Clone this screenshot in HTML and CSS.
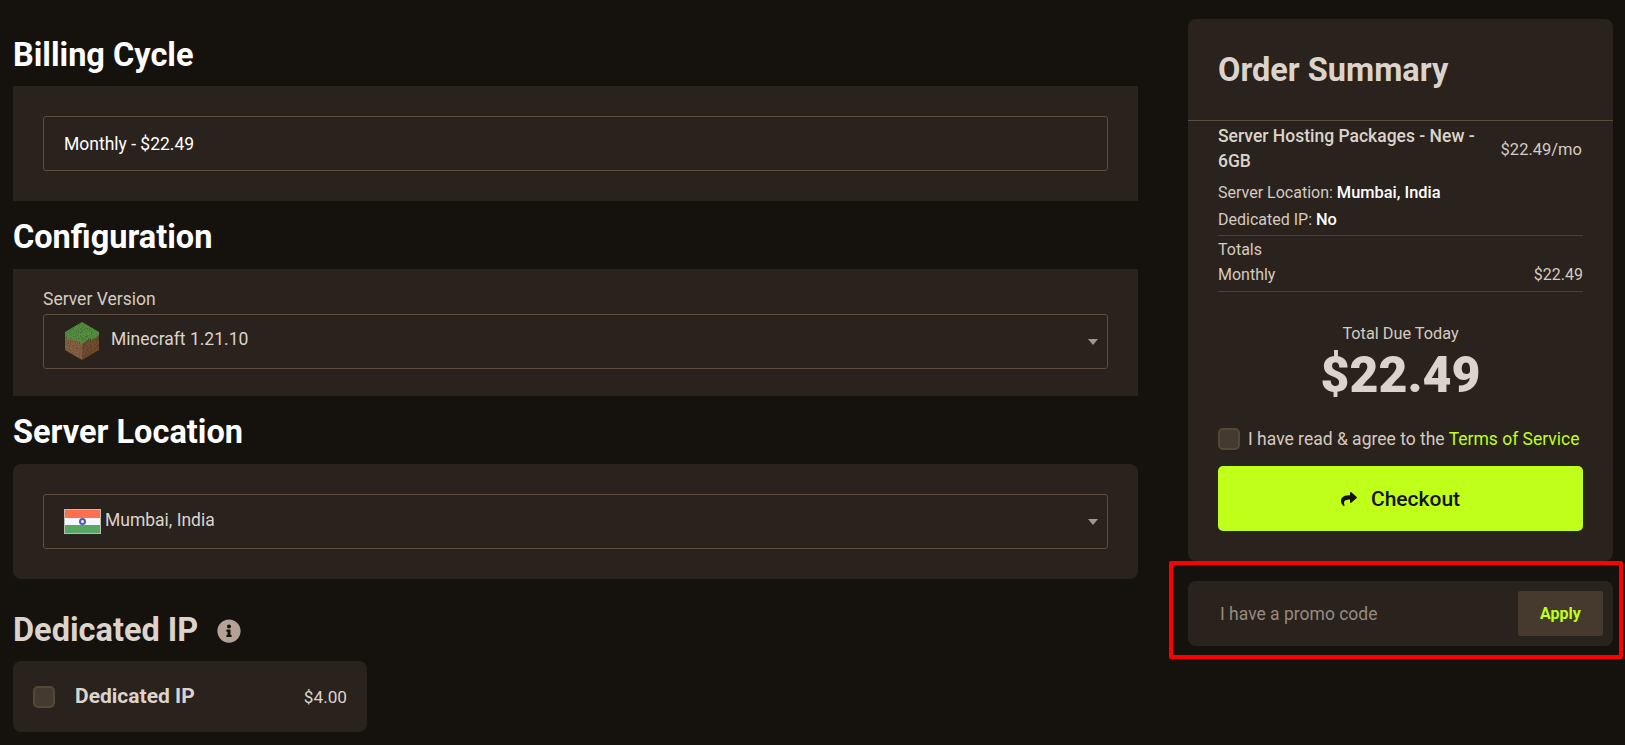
FILE: index.html
```html
<!DOCTYPE html>
<html lang="en">
<head>
<meta charset="utf-8">
<title>Order</title>
<link rel="stylesheet" href="styles.css">
</head>
<body>
<div class="page">
  <main class="main">
    <h2 class="heading">Billing Cycle</h2>
    <section class="panel">
      <div class="field field-light">Monthly - $22.49</div>
    </section>

    <h2 class="heading">Configuration</h2>
    <section class="panel panel-config">
      <div class="label">Server Version</div>
      <div class="field field-select">
        <svg class="block-icon" viewBox="0 0 34 38" width="34" height="38" aria-hidden="true">
          <defs>
            <filter id="speck" x="0" y="0" width="100%" height="100%">
              <feTurbulence type="fractalNoise" baseFrequency="0.9" numOctaves="2" seed="4" result="n"/>
              <feColorMatrix in="n" type="matrix" values="0 0 0 0 0  0 0 0 0 0  0 0 0 0 0  0 0 0 1.2 -0.45" result="a"/>
              <feComposite in="a" in2="SourceGraphic" operator="in" result="d"/>
              <feMerge><feMergeNode in="SourceGraphic"/><feMergeNode in="d"/></feMerge>
            </filter>
          </defs>
          <g filter="url(#speck)">
            <polygon points="0,10 17,20 17,38 0,28" fill="#8a6444"/>
            <polygon points="34,10 17,20 17,38 34,28" fill="#734f36"/>
            <polygon points="17,0 34,10 34,13 28,18 24,17 17,22 10,18 5,18 0,13 0,10" fill="#589342"/>
          </g>
        </svg>
        <span class="field-text">Minecraft 1.21.10</span>
        <i class="caret"></i>
      </div>
    </section>

    <h2 class="heading">Server Location</h2>
    <section class="panel panel-round">
      <div class="field field-select field-flag">
        <span class="flag"><i class="flag-ring"></i></span>
        <span>Mumbai, India</span>
        <i class="caret"></i>
      </div>
    </section>

    <h2 class="heading heading-muted">
      <span>Dedicated IP</span>
      <svg class="info" viewBox="0 0 512 512" width="24" height="24" aria-hidden="true"><path fill="currentColor" d="M256 8C119.043 8 8 119.083 8 256c0 136.997 111.043 248 248 248s248-111.003 248-248C504 119.083 392.957 8 256 8zm0 110c23.196 0 42 18.804 42 42s-18.804 42-42 42-42-18.804-42-42 18.804-42 42-42zm56 254c0 6.627-5.373 12-12 12h-88c-6.627 0-12-5.373-12-12v-24c0-6.627 5.373-12 12-12h12v-64h-12c-6.627 0-12-5.373-12-12v-24c0-6.627 5.373-12 12-12h64c6.627 0 12 5.373 12 12v100h12c6.627 0 12 5.373 12 12v24z"/></svg>
    </h2>
    <section class="addon">
      <i class="check"></i>
      <b class="addon-name">Dedicated IP</b>
      <span class="addon-price">$4.00</span>
    </section>
  </main>

  <aside class="side">
    <section class="summary">
      <h2 class="summary-title">Order Summary</h2>
      <div class="summary-body">
        <div class="item">
          <b class="item-name">Server Hosting Packages - New - 6GB</b>
          <span class="item-price">$22.49/mo</span>
        </div>
        <div class="opt">Server Location: <b>Mumbai, India</b></div>
        <div class="opt">Dedicated IP: <b>No</b></div>
        <div class="totals">
          <div class="totals-title">Totals</div>
          <div class="totals-row"><span>Monthly</span><span>$22.49</span></div>
        </div>
        <div class="due-label">Total Due Today</div>
        <div class="due">$22.49</div>
        <div class="agree">
          <i class="check"></i>
          <span>I have read &amp; agree to the <a class="link">Terms of Service</a></span>
        </div>
        <div class="checkout">
          <svg viewBox="0 0 512 512" width="16" height="16" aria-hidden="true"><path fill="currentColor" d="M503.691 189.836L327.687 37.851C312.281 24.546 288 35.347 288 56.015v80.053C127.371 137.907 0 170.1 0 322.326c0 61.441 39.581 122.309 83.333 154.132 13.653 9.931 33.111-2.533 28.077-18.631C66.066 312.814 132.917 274.316 288 272.085V360c0 20.7 24.3 31.453 39.687 18.164l176.004-152c11.071-9.562 11.086-26.753 0-36.328z"/></svg>
          <span>Checkout</span>
        </div>
      </div>
    </section>
    <section class="promo">
      <span class="promo-text">I have a promo code</span>
      <span class="apply">Apply</span>
      <div class="annotation"></div>
    </section>
  </aside>
</div>
</body>
</html>
```
FILE: styles.css
```css
* { box-sizing: border-box; }
html, body { margin: 0; height: 100%; }
body {
  background: #15120e;
  color: #dcd4cc;
  font-family: Roboto, "Liberation Sans", sans-serif;
  font-size: 16px;
  overflow: hidden;
}
.page { display: flex; gap: 50px; padding: 19px 12px 0 13px; align-items: flex-start; }
.main { width: 1125px; padding-top: 18px; }
.side { width: 425px; }

.heading {
  margin: 18px 0 14px;
  font-size: 32.5px;
  line-height: 36px;
  font-weight: 700;
  color: #fff;
}
.heading:first-child { margin-top: 0; margin-bottom: 13px; }
.heading-muted {
  display: flex; align-items: center; gap: 19px;
  color: #dcd4cc; margin-top: 33px; margin-bottom: 13px;
}
.info { color: #b3a397; flex: none; margin-top: 2px; }

.panel { background: #2a221c; padding: 30px; }
.panel-config { padding-top: 15px; padding-bottom: 27px; }
.panel-round { border-radius: 8px; }
.label { font-size: 17.5px; line-height: 30px; color: #d4cbc2; }

.field {
  display: flex; align-items: center;
  position: relative;
  height: 55px;
  padding: 0 20px;
  border: 1px solid #5e4c3e;
  border-radius: 3px;
  font-size: 17.5px;
}
.field-light { color: #fff; }
.field-select { gap: 12px; padding-left: 21px; }
.field-text { margin-bottom: 6px; }
.field-flag { gap: 4px; padding-left: 20px; padding-bottom: 4px; }
.caret {
  position: absolute; right: 9px; top: 24px;
  border-left: 5px solid transparent;
  border-right: 5px solid transparent;
  border-top: 6px solid #999;
}
.block-icon { flex: none; margin-bottom: 2px; }
.flag {
  flex: none; display: flex; align-items: center; justify-content: center;
  width: 37px; height: 25px;
  border: 1px solid #bdb9b4;
  background: linear-gradient(#ff6f4e 0 33%, #f5f5fa 33% 67%, #56a763 67%);
  margin-top: 4px;
}
.flag-ring { width: 7px; height: 7px; border: 2px solid #4c5ab2; border-radius: 50%; }

.addon {
  display: flex; align-items: center;
  width: 354px; height: 71px;
  padding: 0 20px;
  background: #2a221c;
  border-radius: 8px;
}
.check {
  flex: none; display: block; width: 22px; height: 22px;
  background: #443a30;
  border: 2px solid #574739;
  border-radius: 5px;
}
.addon-name { margin-left: 20px; font-size: 21px; font-weight: 700; margin-bottom: 2px; }
.addon-price { margin-left: auto; font-size: 17.2px; }

.summary { background: #2a221c; border-radius: 8px; height: 542px; }
.summary-title {
  margin: 0; height: 102px;
  padding: 32px 30px 0;
  font-size: 32.5px; line-height: 38px; font-weight: 700;
  border-bottom: 1px solid #5b4d3f;
}
.summary-body { padding: 0 30px; }
.item { display: flex; align-items: center; justify-content: space-between; line-height: 25px; margin-top: 3px; }
.item-name { font-weight: 500; font-size: 17.5px; width: 265px; flex: none; }
.item-price { color: #d4cbc2; white-space: nowrap; font-size: 16.5px; margin-right: 1px; }
.opt { font-size: 16px; line-height: 27px; color: #d4cbc2; }
.opt:nth-of-type(2) { margin-top: 5px; }
.opt b { color: #fff; font-weight: 500; font-size: 16.4px; }
.totals { border-top: 1px solid #4b3f33; border-bottom: 1px solid #4b3f33; font-size: 16px; margin-top: 2px; height: 57px; padding-top: 3px; }
.totals-title { line-height: 22px; color: #d4cbc2; }
.totals-row { display: flex; justify-content: space-between; line-height: 27px; color: #d4cbc2; }
.due-label { margin-top: 32px; text-align: center; font-size: 16.3px; line-height: 20px; color: #d4cbc2; }
.due { text-align: center; font-size: 50px; line-height: 56px; font-weight: 900; margin-top: 3px; }
.agree { display: flex; align-items: center; gap: 8px; margin-top: 25px; font-size: 17.5px; color: #d4cbc2; white-space: nowrap; }
.link { color: #bfff1a; }
.checkout {
  display: flex; align-items: center; justify-content: center; gap: 14px;
  height: 65px; margin-top: 16px;
  background: #bfff1a; color: #15120e;
  border-radius: 5px;
  font-size: 21px; font-weight: 500;
}
.promo {
  position: relative;
  display: flex; align-items: center; justify-content: space-between;
  height: 65px; margin-top: 20px;
  padding: 0 10px 0 32px;
  background: #2a221c; border-radius: 8px;
}
.promo-text { font-size: 17.5px; color: #978b7f; }
.apply {
  display: flex; align-items: center; justify-content: center;
  width: 85px; height: 45px;
  background: #463a2e; color: #bfff1a;
  border-radius: 2px; font-weight: 700; font-size: 16px;
}
.annotation {
  position: absolute; left: -19px; right: -10px; top: -20px; bottom: -13px;
  border: 4px solid #ff0000; border-radius: 2px;
  pointer-events: none;
}
```
